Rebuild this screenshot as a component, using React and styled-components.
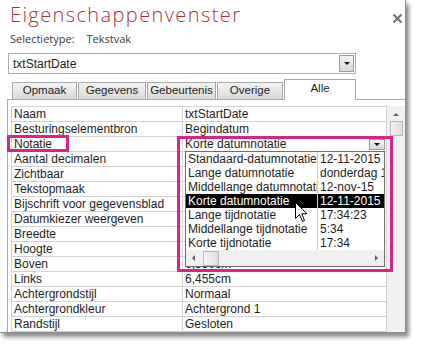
import React from "react";
import styled, { createGlobalStyle } from "styled-components";

const GlobalStyle = createGlobalStyle`
  html, body {
    margin: 0;
    padding: 0;
    background: #ffffff;
  }
  body {
    font-family: "Liberation Sans", Arial, sans-serif;
    color: #1e1e1e;
  }
`;

const Stage = styled.div`
  width: 438px;
  height: 356px;
  background: #fff;
  overflow: hidden;
`;

const Window = styled.div`
  position: relative;
  width: 405px;
  height: 332px;
  background: #fff;
  border-right: 1px solid #8c8c8c;
  border-bottom: 1px solid #8c8c8c;
  box-shadow: 3px 4px 4px rgba(0, 0, 0, 0.45);
  display: flex;
  flex-direction: column;
`;

const Header = styled.div`
  display: flex;
  justify-content: space-between;
  align-items: flex-start;
  padding: 2px 2px 0 10px;
`;

const Title = styled.div`
  font-family: "Open Sans", "Noto Sans", sans-serif;
  font-size: 20px;
  font-weight: 300;
  line-height: 26px;
  letter-spacing: 1.4px;
  color: #a4373a;
`;

const Close = styled.div`
  margin-top: 8px;
  width: 11px;
  height: 11px;
`;

const SelectionType = styled.div`
  display: flex;
  gap: 12px;
  padding-left: 10px;
  margin-top: 4px;
  font-family: "Open Sans", "Noto Sans", sans-serif;
  font-size: 11px;
  line-height: 14px;
  color: #3a3a3a;
`;

const Combo = styled.div`
  margin: 7px 0 0 8px;
  width: 342px;
  height: 19px;
  border: 1px solid #abadb3;
  display: flex;
  align-items: center;
  justify-content: space-between;
  padding-left: 4px;
  font-size: 12px;
`;

const DropButton = styled.div`
  width: ${(p) => p.$w}px;
  height: ${(p) => p.$h}px;
  margin-right: 1px;
  box-sizing: border-box;
  border: 1px solid #9a9a9a;
  background: linear-gradient(#f4f4f4, #d8d8d8);
  display: flex;
  align-items: center;
  justify-content: center;
  flex-shrink: 0;
  &::after {
    content: "";
    border-left: 3px solid transparent;
    border-right: 3px solid transparent;
    border-top: 3px solid #111;
  }
`;

const Tabs = styled.div`
  display: flex;
  align-items: flex-end;
  gap: 1px;
  height: 20px;
  margin-top: 5px;
  padding-left: 12px;
  position: relative;
  z-index: 1;
`;

const Tab = styled.div`
  width: ${(p) => p.$w}px;
  height: ${(p) => (p.$active ? 21 : 17)}px;
  box-sizing: border-box;
  border: 1px solid #a8a8a8;
  border-bottom: ${(p) => (p.$active ? "1px solid #fff" : "none")};
  margin-bottom: ${(p) => (p.$active ? -1 : 0)}px;
  padding-top: ${(p) => (p.$active ? 1 : 0)}px;
  background: ${(p) =>
    p.$active ? "#fff" : "linear-gradient(#f3f3f3, #d9d9d9)"};
  font-size: 11.5px;
  line-height: 15px;
  text-align: center;
  color: #1e1e1e;
`;

const Panel = styled.div`
  flex: 1;
  min-height: 0;
  margin-left: 7px;
  border-top: 1px solid #a8a8a8;
  border-left: 1px solid #a8a8a8;
  padding: 6px 0 0 3px;
  display: flex;
  overflow: hidden;
`;

const Grid = styled.div`
  width: 375px;
  border-left: 1px solid #d2d2d2;
  border-top: 1px solid #d2d2d2;
  align-self: flex-start;
`;

const Row = styled.div`
  display: grid;
  grid-template-columns: 171px 1fr;
  height: 14px;
  border-bottom: 1px solid #d2d2d2;
  font-size: 12px;
  line-height: 14px;
`;

const Cell = styled.div`
  padding-left: 2px;
  white-space: nowrap;
  overflow: hidden;
  border-right: 1px solid #d2d2d2;
  display: flex;
  justify-content: space-between;
  align-items: center;
`;

const VScroll = styled.div`
  width: 18px;
  background: #f0f0f0;
  display: flex;
  flex-direction: column;
  align-items: center;
`;

const Arrow = styled.div`
  width: 0;
  height: 0;
  margin: ${(p) => p.$m || "0"};
  border-style: solid;
  border-color: transparent;
  ${(p) =>
    p.$dir === "up" &&
    "border-width: 0 3px 3px 3px; border-bottom-color: #606060;"}
  ${(p) =>
    p.$dir === "left" &&
    "border-width: 3px 3px 3px 0; border-right-color: #606060;"}
  ${(p) =>
    p.$dir === "right" &&
    "border-width: 3px 0 3px 3px; border-left-color: #606060;"}
`;

const Thumb = styled.div`
  width: ${(p) => p.$w}px;
  height: ${(p) => p.$h}px;
  margin: ${(p) => p.$m || "0"};
  box-sizing: border-box;
  border: 1px solid #b9b9b9;
  background: linear-gradient(90deg, #f4f4f4, #dedede);
`;

const List = styled.div`
  position: absolute;
  left: 185px;
  top: 151px;
  width: 198px;
  height: 114px;
  border: 1px solid #6e6e6e;
  background: #fff;
  display: flex;
  flex-direction: column;
`;

const ListRow = styled.div`
  display: grid;
  grid-template-columns: 132px 1fr;
  height: 14px;
  font-size: 12px;
  line-height: 14px;
  background: ${(p) => (p.$sel ? "#000" : "#fff")};
  color: ${(p) => (p.$sel ? "#fff" : "#1e1e1e")};
`;

const ListCell = styled.div`
  padding-left: 2px;
  white-space: nowrap;
  overflow: hidden;
  border-right: ${(p) => (p.$first ? "1px solid #d0d0d0" : "none")};
`;

const HScroll = styled.div`
  margin-top: auto;
  height: 16px;
  background: #f0f0f0;
  display: flex;
  align-items: center;
  padding: 0 6px;
`;

const Highlight = styled.div`
  position: absolute;
  left: ${(p) => p.$x}px;
  top: ${(p) => p.$y}px;
  width: ${(p) => p.$w}px;
  height: ${(p) => p.$h}px;
  box-sizing: border-box;
  border: 3px solid #dc2284;
  pointer-events: none;
`;

const Cursor = styled.svg`
  position: absolute;
  left: 295px;
  top: 202px;
`;

const props = [
  ["Naam", "txtStartDate"],
  ["Besturingselementbron", "Begindatum"],
  ["Notatie", "Korte datumnotatie", true],
  ["Aantal decimalen", ""],
  ["Zichtbaar", ""],
  ["Tekstopmaak", ""],
  ["Bijschrift voor gegevensblad", ""],
  ["Datumkiezer weergeven", ""],
  ["Breedte", ""],
  ["Hoogte", ""],
  ["Boven", "6,350cm"],
  ["Links", "6,455cm"],
  ["Achtergrondstijl", "Normaal"],
  ["Achtergrondkleur", "Achtergrond 1"],
  ["Randstijl", "Gesloten"],
];

const formats = [
  ["Standaard-datumnotatie", "12-11-2015 17:34:23"],
  ["Lange datumnotatie", "donderdag 12 november 2015"],
  ["Middellange datumnotatie", "12-nov-15"],
  ["Korte datumnotatie", "12-11-2015", true],
  ["Lange tijdnotatie", "17:34:23"],
  ["Middellange tijdnotatie", "5:34"],
  ["Korte tijdnotatie", "17:34"],
];

const tabs = [
  ["Opmaak", 65],
  ["Gegevens", 68],
  ["Gebeurtenis", 69],
  ["Overige", 66],
  ["Alle", 72, true],
];

export default function App() {
  return (
    <Stage>
      <GlobalStyle />
      <Window>
        <Header>
          <Title>Eigenschappenvenster</Title>
          <Close>
            <svg width="11" height="11" viewBox="0 0 11 11">
              <path
                d="M1.5 1.5 L9.5 9.5 M9.5 1.5 L1.5 9.5"
                stroke="#6f6f6f"
                strokeWidth="2"
              />
            </svg>
          </Close>
        </Header>
        <SelectionType>
          <span>Selectietype:</span>
          <span>Tekstvak</span>
        </SelectionType>
        <Combo>
          <span>txtStartDate</span>
          <DropButton $w={15} $h={17} />
        </Combo>
        <Tabs>
          {tabs.map(([label, w, active]) => (
            <Tab key={label} $w={w} $active={active}>
              {label}
            </Tab>
          ))}
        </Tabs>
        <Panel>
          <Grid>
            {props.map(([name, value, combo]) => (
              <Row key={name}>
                <Cell>{name}</Cell>
                <Cell>
                  {value}
                  {combo && <DropButton $w={16} $h={11} />}
                </Cell>
              </Row>
            ))}
          </Grid>
          <VScroll>
            <Arrow $dir="up" $m="7px 0 5px 0" />
            <Thumb $w={13} $h={15} />
          </VScroll>
        </Panel>

        <List>
          {formats.map(([name, sample, sel]) => (
            <ListRow key={name} $sel={sel}>
              <ListCell $first>{name}</ListCell>
              <ListCell>{sample}</ListCell>
            </ListRow>
          ))}
          <HScroll>
            <Arrow $dir="left" />
            <Thumb $w={16} $h={15} $m="0 auto 0 8px" />
            <Arrow $dir="right" />
          </HScroll>
        </List>

        <Highlight $x={7} $y={135} $w={62} $h={17} />
        <Highlight $x={177} $y={136} $w={216} $h={136} />

        <Cursor width="13" height="21" viewBox="0 0 13 21">
          <path
            d="M0.5 0.5 L0.5 16.5 L4.5 12.5 L7.5 19.5 L9.5 18.5 L6.8 11.8 L12 11.8 Z"
            fill="#fff"
            stroke="#000"
            strokeWidth="1"
          />
        </Cursor>
      </Window>
    </Stage>
  );
}
